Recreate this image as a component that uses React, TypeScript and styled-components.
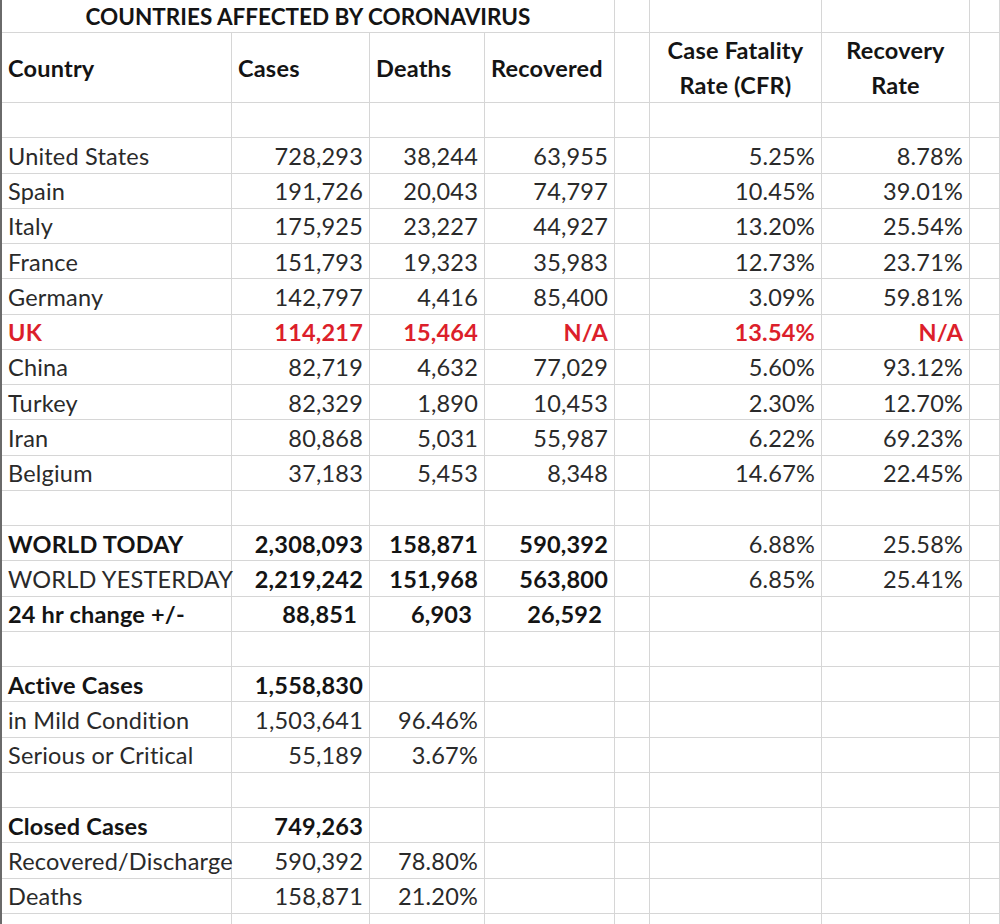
import React from "react";
import styled, { createGlobalStyle } from "styled-components";

const GlobalStyle = createGlobalStyle`
  html, body {
    margin: 0;
    padding: 0;
    background: #ffffff;
  }
  body {
    font-family: Lato, "Open Sans", "Liberation Sans", sans-serif;
    color: #262626;
  }
`;

const LINE = "#d6d6d6";

const Sheet = styled.div`
  display: grid;
  grid-template-columns: 230px 138px 115px 130px 35px 172px 148px 1fr;
  grid-template-rows: 33px 70px;
  grid-auto-rows: 35.25px;
  width: 1000px;
  height: 924px;
  overflow: hidden;
  border-left: 2px solid #6a6a6a;
  box-sizing: border-box;
  font-size: 23.5px;
  letter-spacing: 0.2px;
`;

type Align = "left" | "right" | "center";

const Cell = styled.div<{
  $align?: Align;
  $bold?: boolean;
  $red?: boolean;
  $inset?: number;
}>`
  display: flex;
  align-items: center;
  justify-content: ${(p) =>
    p.$align === "right" ? "flex-end" : p.$align === "center" ? "center" : "flex-start"};
  padding: 1px ${(p) => p.$inset ?? 6}px 0 6px;
  border-right: 1px solid ${LINE};
  border-bottom: 1px solid ${LINE};
  box-sizing: border-box;
  white-space: nowrap;
  overflow: visible;
  font-weight: ${(p) => (p.$bold ? 700 : 400)};
  color: ${(p) => (p.$red ? "#dc1f2b" : p.$bold ? "#141414" : "#2a2a2a")};
`;

const Title = styled(Cell)`
  grid-column: 1 / span 4;
  justify-content: center;
  font-size: 22.5px;
  letter-spacing: 0;
  font-weight: 700;
  color: #141414;
`;

const HeadCell = styled(Cell)`
  flex-direction: column;
  align-items: ${(p) => (p.$align === "center" ? "center" : "flex-start")};
  justify-content: center;
  font-weight: 700;
  color: #141414;
  line-height: 35px;
`;

type Row = {
  label?: string;
  cells?: string[]; // cases, deaths, recovered, cfr, rr
  boldLabel?: boolean;
  boldNums?: number[]; // indexes of bold number cells
  red?: boolean;
  inset?: number;
};

const rows: Row[] = [
  {},
  { label: "United States", cells: ["728,293", "38,244", "63,955", "5.25%", "8.78%"] },
  { label: "Spain", cells: ["191,726", "20,043", "74,797", "10.45%", "39.01%"] },
  { label: "Italy", cells: ["175,925", "23,227", "44,927", "13.20%", "25.54%"] },
  { label: "France", cells: ["151,793", "19,323", "35,983", "12.73%", "23.71%"] },
  { label: "Germany", cells: ["142,797", "4,416", "85,400", "3.09%", "59.81%"] },
  { label: "UK", cells: ["114,217", "15,464", "N/A", "13.54%", "N/A"], red: true, boldLabel: true, boldNums: [0, 1, 2, 3, 4] },
  { label: "China", cells: ["82,719", "4,632", "77,029", "5.60%", "93.12%"] },
  { label: "Turkey", cells: ["82,329", "1,890", "10,453", "2.30%", "12.70%"] },
  { label: "Iran", cells: ["80,868", "5,031", "55,987", "6.22%", "69.23%"] },
  { label: "Belgium", cells: ["37,183", "5,453", "8,348", "14.67%", "22.45%"] },
  {},
  { label: "WORLD TODAY", cells: ["2,308,093", "158,871", "590,392", "6.88%", "25.58%"], boldLabel: true, boldNums: [0, 1, 2] },
  { label: "WORLD YESTERDAY", cells: ["2,219,242", "151,968", "563,800", "6.85%", "25.41%"], boldNums: [0, 1, 2] },
  { label: "24 hr change +/-", cells: ["88,851", "6,903", "26,592", "", ""], boldLabel: true, boldNums: [0, 1, 2], inset: 12 },
  {},
  { label: "Active Cases", cells: ["1,558,830", "", "", "", ""], boldLabel: true, boldNums: [0] },
  { label: "in Mild Condition", cells: ["1,503,641", "96.46%", "", "", ""] },
  { label: "Serious or Critical", cells: ["55,189", "3.67%", "", "", ""] },
  {},
  { label: "Closed Cases", cells: ["749,263", "", "", "", ""], boldLabel: true, boldNums: [0] },
  { label: "Recovered/Discharge", cells: ["590,392", "78.80%", "", "", ""] },
  { label: "Deaths", cells: ["158,871", "21.20%", "", "", ""] },
  {},
];

const DataRow: React.FC<{ row: Row }> = ({ row }) => {
  const c = row.cells ?? ["", "", "", "", ""];
  const bold = (i: number) => !!row.boldNums?.includes(i);
  const inset = (i: number) => (i < 3 ? row.inset : undefined);
  return (
    <>
      <Cell $bold={row.boldLabel} $red={row.red}>
        {row.label}
      </Cell>
      {c.slice(0, 3).map((v, i) => (
        <Cell key={i} $align="right" $bold={bold(i)} $red={row.red} $inset={inset(i)}>
          {v}
        </Cell>
      ))}
      <Cell />
      {c.slice(3).map((v, i) => (
        <Cell key={i + 3} $align="right" $bold={bold(i + 3)} $red={row.red}>
          {v}
        </Cell>
      ))}
      <Cell />
    </>
  );
};

export default function App() {
  return (
    <>
      <GlobalStyle />
      <Sheet>
        <Title>COUNTRIES AFFECTED BY CORONAVIRUS</Title>
        <Cell />
        <Cell />
        <Cell />
        <Cell />

        <HeadCell>Country</HeadCell>
        <HeadCell>Cases</HeadCell>
        <HeadCell>Deaths</HeadCell>
        <HeadCell>Recovered</HeadCell>
        <HeadCell />
        <HeadCell $align="center">
          <span>Case Fatality</span>
          <span>Rate (CFR)</span>
        </HeadCell>
        <HeadCell $align="center">
          <span>Recovery</span>
          <span>Rate</span>
        </HeadCell>
        <HeadCell />

        {rows.map((r, i) => (
          <DataRow key={i} row={r} />
        ))}
      </Sheet>
    </>
  );
}
